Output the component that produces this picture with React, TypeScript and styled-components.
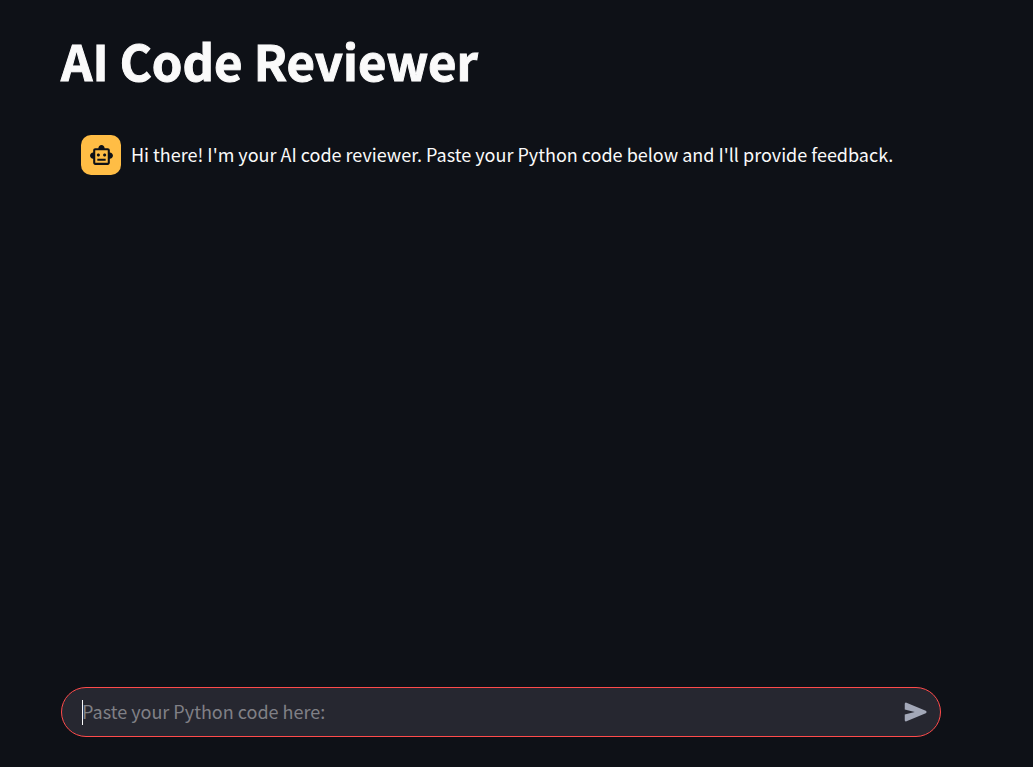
import React, { useState } from "react";
import styled, { createGlobalStyle } from "styled-components";
import { MdOutlineSmartToy } from "react-icons/md";

const GlobalStyle = createGlobalStyle`
  *, *::before, *::after { box-sizing: border-box; }
  body {
    margin: 0;
    background: #0e1117;
    color: #fafafa;
    font-family: "Noto Sans CJK SC", "Noto Sans", sans-serif;
    font-size: 18px;
  }
`;

const Page = styled.div`
  display: flex;
  flex-direction: column;
  min-height: 100vh;
  padding: 27px 92px 30px 61px;
`;

const Title = styled.h1`
  margin: 0;
  font-size: 49px;
  line-height: 66px;
  font-weight: 700;
  -webkit-text-stroke: 1px #fafafa;
`;

const Messages = styled.main`
  flex: 1;
  padding: 42px 20px 20px;
`;

const Message = styled.article`
  display: flex;
  align-items: flex-start;
  gap: 10px;
`;

const Avatar = styled.div`
  display: flex;
  flex-shrink: 0;
  align-items: center;
  justify-content: center;
  width: 40px;
  height: 40px;
  border-radius: 10px;
  background: #ffbd45;
  color: #0e1117;
`;

const MessageText = styled.p`
  margin: 0;
  line-height: 38px;
`;

const Composer = styled.form`
  display: flex;
  align-items: center;
  height: 50px;
  padding: 0 9px 0 20px;
  border: 1px solid #ff4b4b;
  border-radius: 25px;
  background: #262730;
`;

const Field = styled.div`
  position: relative;
  flex: 1;
  min-width: 0;
`;

const Caret = styled.span`
  position: absolute;
  top: 0;
  left: 0;
  width: 1px;
  height: 100%;
  background: #fafafa;
`;

const Input = styled.input`
  display: block;
  width: 100%;
  height: 25px;
  padding: 0 0 2px;
  border: 0;
  outline: 0;
  background: transparent;
  color: #fafafa;
  font: inherit;

  &:placeholder-shown { caret-color: transparent; }
  &::placeholder { color: #808086; opacity: 1; }
`;

const SendButton = styled.button`
  display: flex;
  padding: 0;
  border: 0;
  background: transparent;
  color: #a3a8b8;
  cursor: pointer;
`;

export default function App() {
  const [code, setCode] = useState("");
  return (
    <>
      <GlobalStyle />
      <Page>
        <Title>AI Code Reviewer</Title>
        <Messages>
          <Message>
            <Avatar>
              <MdOutlineSmartToy size={25} aria-hidden="true" />
            </Avatar>
            <MessageText>
              Hi there! I'm your AI code reviewer. Paste your Python code below and I'll provide feedback.
            </MessageText>
          </Message>
        </Messages>
        <Composer onSubmit={(e) => e.preventDefault()}>
          <Field>
            {code === "" && <Caret />}
            <Input
              aria-label="Paste your Python code here:"
              placeholder="Paste your Python code here:"
              value={code}
              onChange={(e) => setCode(e.target.value)}
            />
          </Field>
          <SendButton type="submit" aria-label="Send">
            <svg width="30" height="30" viewBox="0 -960 960 960" fill="currentColor" aria-hidden="true">
              <path d="M792-443 176-183q-20 8-38-3.500T120-220v-180l320-80-320-80v-180q0-22 18-33.500t38-3.500l616 260q25 11 25 37t-25 37Z" />
            </svg>
          </SendButton>
        </Composer>
      </Page>
    </>
  );
}
